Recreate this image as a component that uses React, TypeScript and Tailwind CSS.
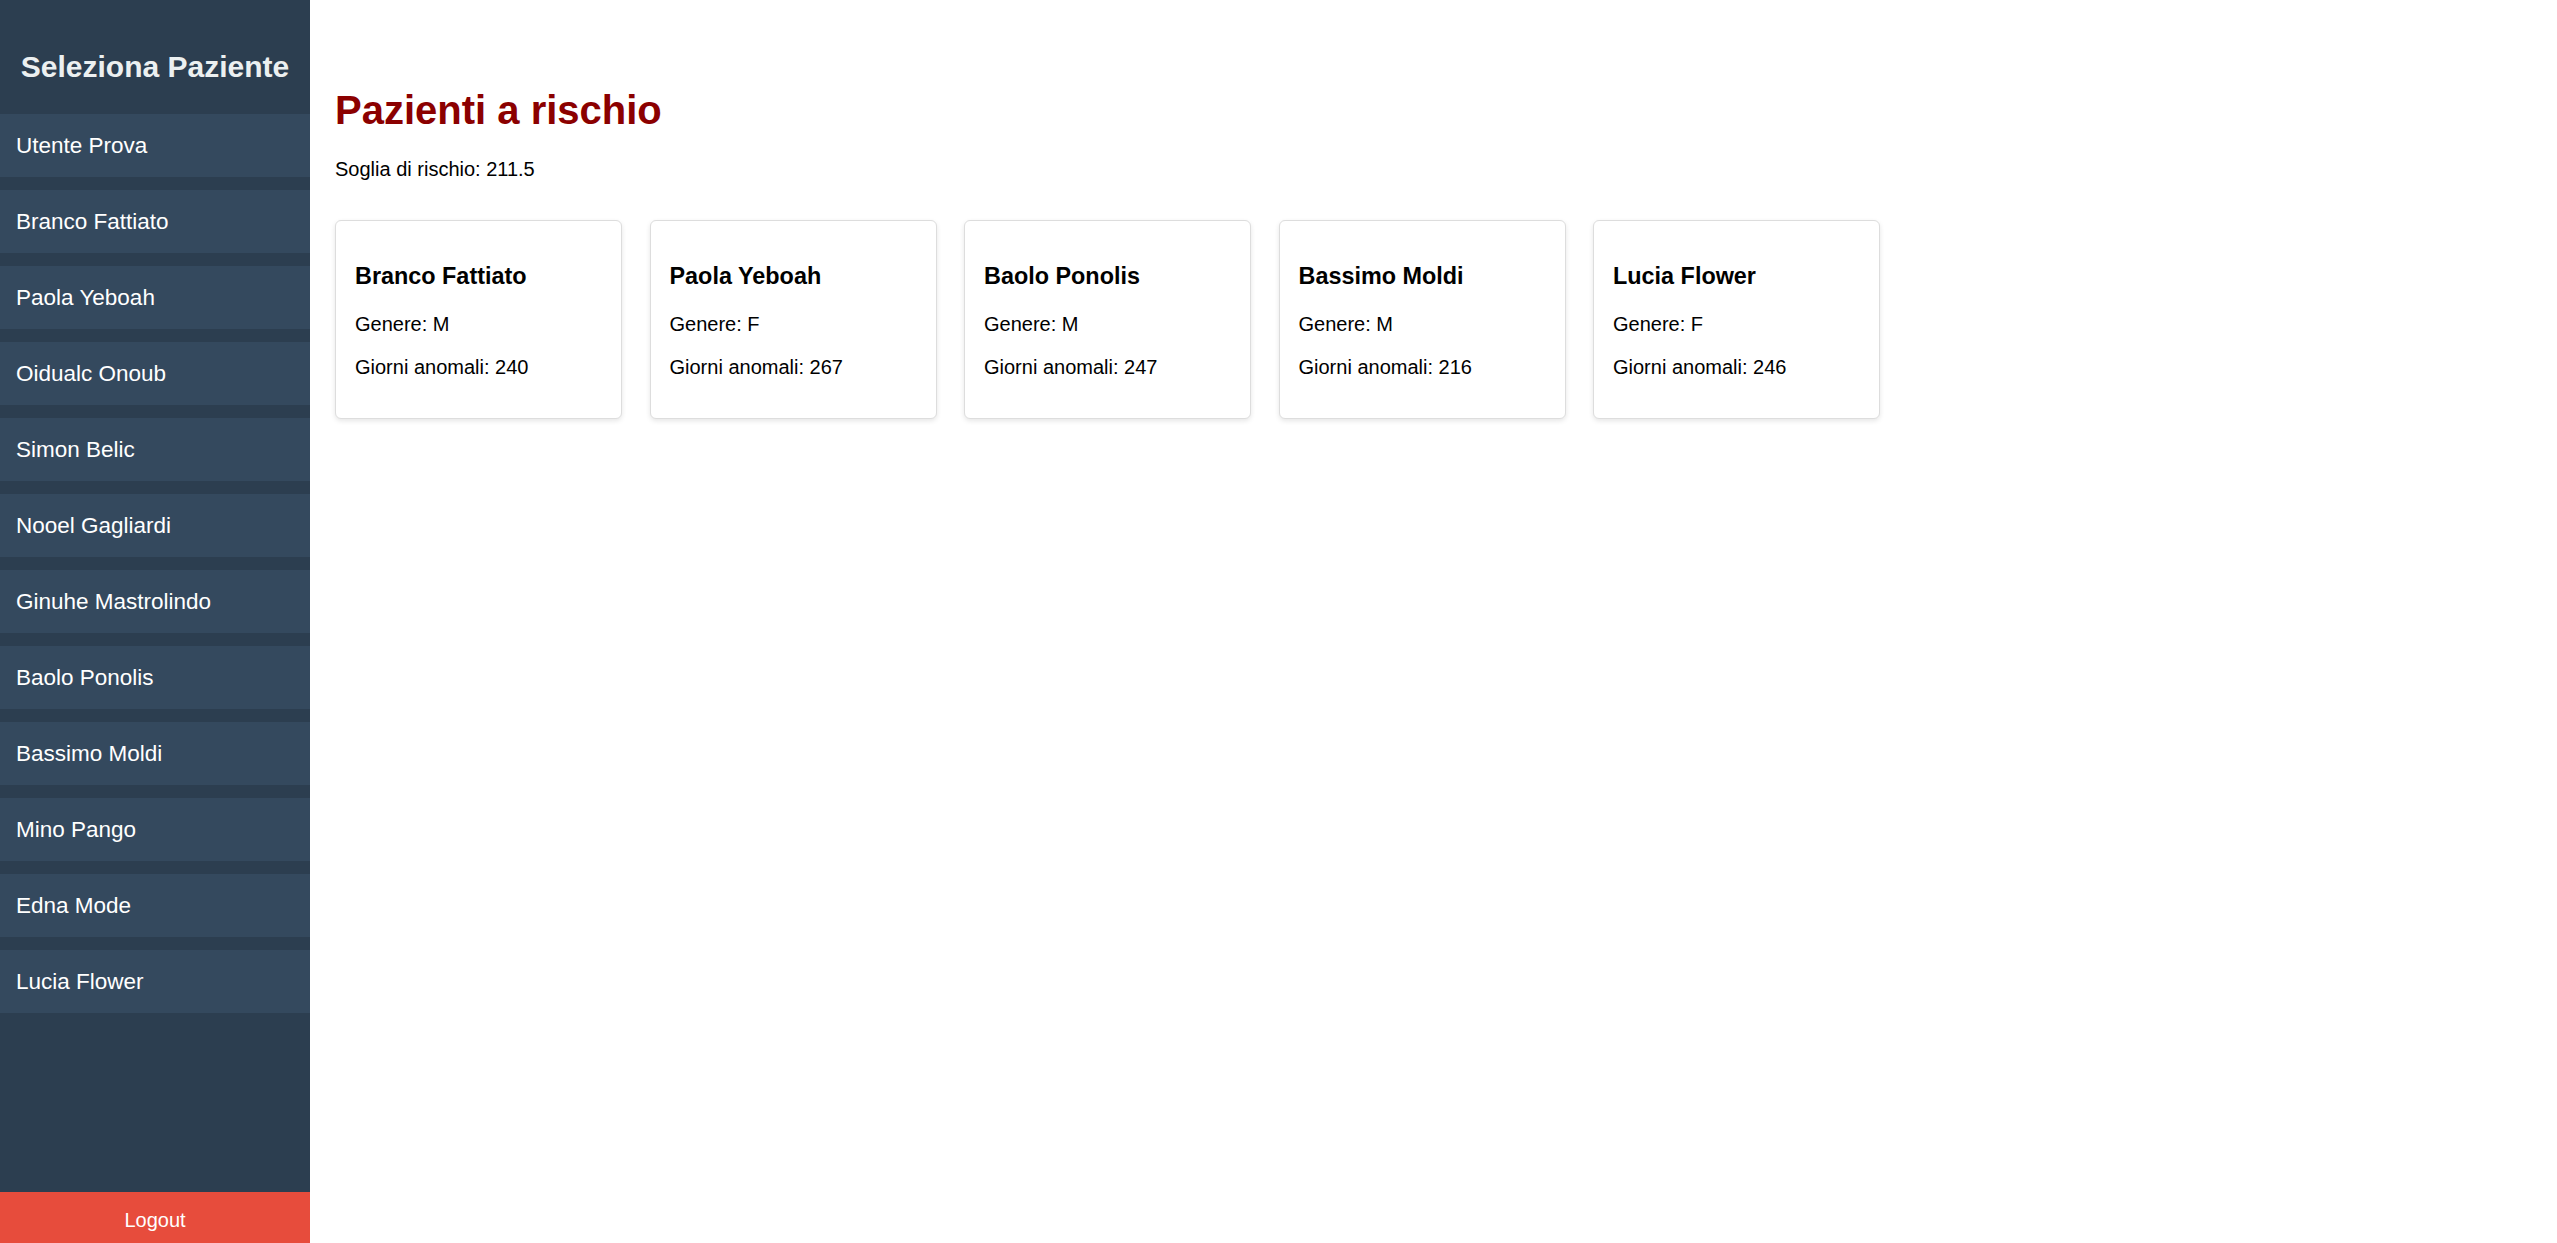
import React from 'react';

type Patient = { name: string; gender: string; days: number };

const sidebarPatients = [
  'Utente Prova',
  'Branco Fattiato',
  'Paola Yeboah',
  'Oidualc Onoub',
  'Simon Belic',
  'Nooel Gagliardi',
  'Ginuhe Mastrolindo',
  'Baolo Ponolis',
  'Bassimo Moldi',
  'Mino Pango',
  'Edna Mode',
  'Lucia Flower',
];

const riskPatients: Patient[] = [
  { name: 'Branco Fattiato', gender: 'M', days: 240 },
  { name: 'Paola Yeboah', gender: 'F', days: 267 },
  { name: 'Baolo Ponolis', gender: 'M', days: 247 },
  { name: 'Bassimo Moldi', gender: 'M', days: 216 },
  { name: 'Lucia Flower', gender: 'F', days: 246 },
];

const App = () => {
  return (
    <div
      className="flex min-h-screen bg-white text-black"
      style={{ fontFamily: '"Liberation Sans", Arial, sans-serif' }}
    >
      {/* --- SIDEBAR --- */}
      <aside className="w-[310px] shrink-0 h-screen bg-[#2c3e50] flex flex-col">
        <div className="h-[114px] pt-[50px] text-center">
          <h2 className="text-[30px] leading-[34px] font-bold text-[#ecf0f1]">Seleziona Paziente</h2>
        </div>
        <ul className="flex flex-col gap-[13px]">
          {sidebarPatients.map((name) => (
            <li
              key={name}
              className="h-[63px] bg-[#34495e] flex items-center px-4 text-[22.5px] text-white cursor-pointer"
            >
              {name}
            </li>
          ))}
        </ul>
        <button className="mt-auto h-[51px] w-full pt-[5px] bg-[#e74c3c] text-white text-[20px]">Logout</button>
      </aside>

      {/* --- MAIN --- */}
      <main className="flex-1 pl-[25px] pt-[87px]">
        <h1 className="text-[40px] leading-[46px] font-bold text-[#8b0000]">Pazienti a rischio</h1>
        <p className="mt-[25px] text-[20px] leading-[23px]">Soglia di rischio: 211.5</p>

        <div className="mt-[39px] flex gap-[27.5px]">
          {riskPatients.map((p) => (
            <div
              key={p.name}
              className="w-[287px] bg-white border border-[#dddddd] rounded-[6px] shadow-[0_2px_5px_rgba(0,0,0,0.1)] px-[19px] pt-[42px] pb-[39px] flex flex-col"
            >
              <h3 className="text-[23.4px] leading-[27px] font-bold">{p.name}</h3>
              <p className="mt-[23px] text-[20px] leading-[23px]">Genere: {p.gender}</p>
              <p className="mt-[20px] text-[20px] leading-[23px]">Giorni anomali: {p.days}</p>
            </div>
          ))}
        </div>
      </main>
    </div>
  );
};

export default App;
